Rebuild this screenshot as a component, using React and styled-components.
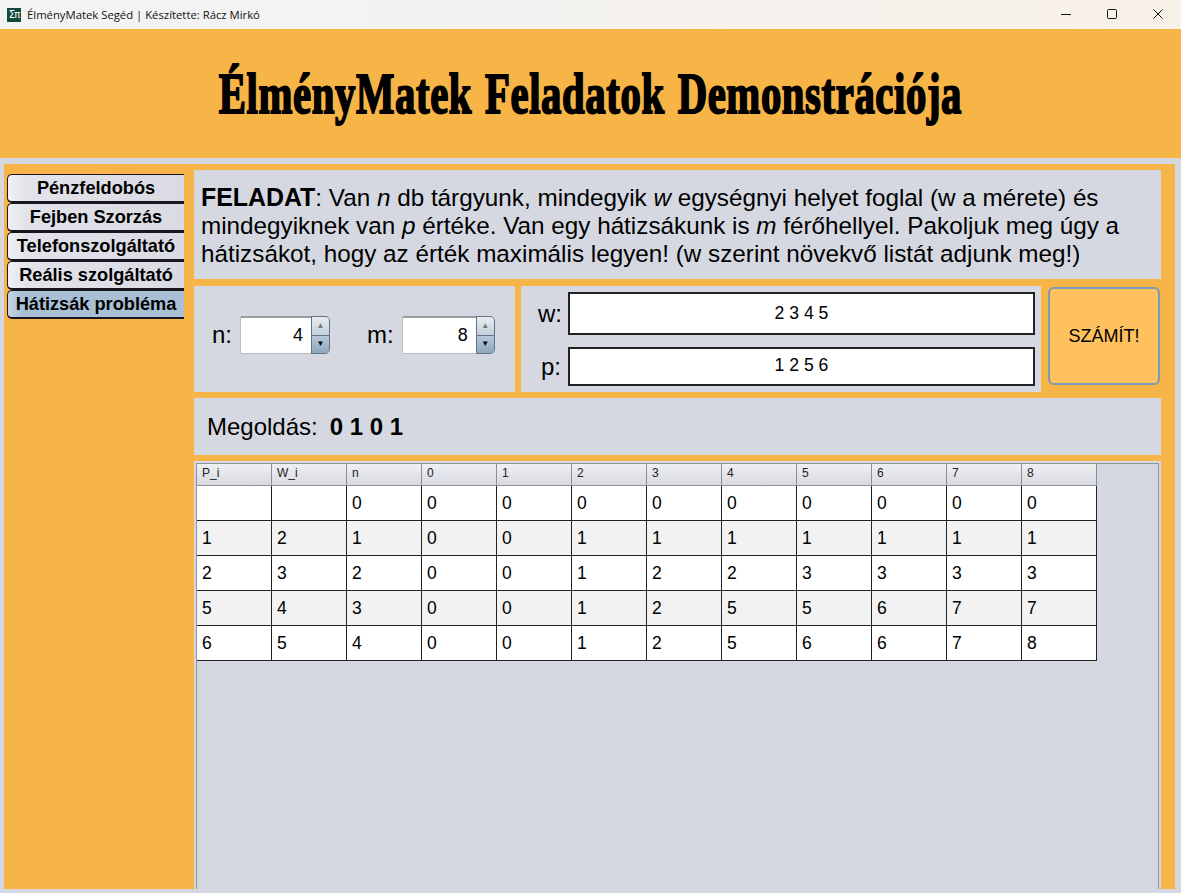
import React from "react";
import styled, { createGlobalStyle } from "styled-components";

const Global = createGlobalStyle`
  html, body { margin: 0; padding: 0; background: #d6d8e1; }
  body { font-family: "Liberation Sans", Arial, sans-serif; color: #000; overflow: hidden; }
`;
const Window = styled.div`
  width: 1181px; height: 893px; display: flex; flex-direction: column; background: #d6d8e1; overflow: hidden;
`;
const TitleBar = styled.div`
  height: 29px; flex: none; display: flex; align-items: center;
  background: linear-gradient(90deg, #f3f3f3 0%, #f3f3f3 30%, #f8f1e8 100%);
`;
const AppIcon = styled.div`
  width: 14px; height: 14px; margin-left: 7px; background: #12493b; color: #fff; display: flex; align-items: center; justify-content: center;
  font: 10px/14px "DejaVu Sans", sans-serif; letter-spacing: -1px; flex: none;
`;
const TitleText = styled.div`
  margin-left: 6px; font: 11.3px "Open Sans", "Noto Sans", sans-serif; color: #111; flex: 1;
`;
const WinButtons = styled.div` display: flex; height: 100%; `;
const WinButton = styled.div`
  width: 46px; height: 27px; padding-bottom: 2px; display: flex; align-items: center; justify-content: center;
`;
const Banner = styled.header`
  height: 129px; flex: none; background: #f8b547; display: flex; align-items: center; justify-content: center;
`;
const BannerTitle = styled.h1`
  margin: 0 0 0 -1px; white-space: nowrap; font: bold 56px "Liberation Serif", serif; color: #000;
  -webkit-text-stroke: 1.9px #000; letter-spacing: 0.8px; word-spacing: 3px; transform: scaleX(0.728);
`;
const Frame = styled.div`
  margin: 6px 6px 4px 4px; height: 725px; flex: none; background: #f8b547; display: flex;
`;
const Sidebar = styled.nav`
  width: 190px; flex: none; padding: 10px 10px 0 3px; box-sizing: border-box; display: flex; flex-direction: column;
`;
const NavButton = styled.div`
  height: 29px; box-sizing: border-box; border: 1px solid #17171f; border-right: none; border-width: 1px 0 2px 1px;
  border-radius: 5px 0 0 5px; display: flex; align-items: center; justify-content: center;
  font: bold 18.2px "Liberation Sans", sans-serif; white-space: nowrap;
  background: ${p => p.$active
    ? "linear-gradient(90deg, #c9d6e2 0%, #a8bfd6 8%, #a9bfd5 100%)"
    : "linear-gradient(90deg, #f0f1f4 0%, #e2e3ea 10%, #d9dae2 100%)"};
`;
const Main = styled.main`
  width: 967px; flex: none; padding-top: 6px; display: flex; flex-direction: column; gap: 6px;
`;
const Task = styled.section`
  height: 109px; box-sizing: border-box; margin-bottom: 1px; background: #d6d8e1; padding: 13px 6px 0 7px;
  font-size: 24.27px; line-height: 28px; color: #000; white-space: nowrap;
`;
const TaskLead = styled.b` font-size: 24.9px; `;
const InputsRow = styled.div` display: flex; height: 106px; `;
const SizePanel = styled.section`
  width: 321px; flex: none; background: #d6d8e1; display: flex; align-items: center; padding-left: 18px; box-sizing: border-box;
  padding-bottom: 8px;
`;
const BigLabel = styled.span`
  font-size: 24px; color: #000; flex: none;
`;
const Spinner = styled.div`
  width: ${p => p.$w}px; height: 38px; margin-left: 8px; display: flex; flex: none; box-sizing: border-box;
  border: 1px solid #b9bbc0; border-top: 2px solid #9a9b9f; border-radius: 2px 5px 5px 2px; background: #fff;
`;
const SpinnerValue = styled.div`
  flex: 1; text-align: right; padding-right: 8px; font-size: 18px; line-height: 35px; height: 35px;
`;
const SpinArrows = styled.div`
  width: 17px; flex: none; margin: -2px -1px -1px 0; display: flex; flex-direction: column;
  border: 1px solid #5f7488; border-radius: 0 5px 5px 0; overflow: hidden;
`;
const SpinArrow = styled.div`
  flex: 1; display: flex; align-items: center; justify-content: center; font-size: 8px; line-height: 1;
  background: ${p => p.$down ? "linear-gradient(#b5c8da,#8fa6bd)" : "linear-gradient(#e8ecf0,#c3cfdb)"};
  color: ${p => p.$down ? "#000" : "#777"};
  ${p => p.$down ? "border-top: 1px solid #5f7488;" : ""}
`;
const SecondLabel = styled(BigLabel)` margin-left: 37px; `;
const ListPanel = styled.section`
  width: 520px; margin-left: 6px; flex: none; box-sizing: border-box; background: #d6d8e1; padding: 6px 6px 0 17px;
  display: flex; flex-direction: column; gap: 12px;
`;
const ListRow = styled.div` display: flex; align-items: center; gap: 7px; `;
const ListLabel = styled(BigLabel)` width: 23px; text-align: right; `;
const ListField = styled.div`
  flex: 1; box-sizing: border-box; height: ${p => p.$h}px; background: #fff; border: 2px solid #222;
  display: flex; align-items: center; justify-content: center; font-size: 17.6px; padding-bottom: ${p => p.$shift}px;
`;
const Compute = styled.button`
  width: 112px; height: 98px; margin: 1px 0 0 7px; flex: none; box-sizing: border-box; border: 2px solid #7d9ab5; border-radius: 6px;
  background: #ffc05e; font: 18px "Liberation Sans", sans-serif; color: #000; padding: 0;
`;
const Solution = styled.section`
  height: 57px; background: #d6d8e1; display: flex; align-items: center; padding-left: 13px; box-sizing: border-box;
  font-size: 24px;
`;
const SolutionValue = styled.b` margin-left: 12px; `;
const TablePanel = styled.section`
  flex: 1; min-height: 0; background: #d6d8e1; padding: 2px 2px 0 2px; box-sizing: border-box; display: flex;
`;
const TableFrame = styled.div`
  flex: 1; box-sizing: border-box; border: 1px solid #8f929c; border-bottom: none;
`;
const Grid = styled.div`
  display: grid; grid-template-columns: repeat(12, 75px); width: 900px;
`;
const HeadCell = styled.div`
  height: 22px; box-sizing: border-box; padding: 2px 0 0 5px; font-size: 12px; line-height: 15px; color: #222;
  background: linear-gradient(#eff0f3, #d8dae1); border-right: 1px solid #8b8e96; border-bottom: 1px solid #8b8e96;
`;
const Cell = styled.div`
  height: 35px; box-sizing: border-box; padding: 0 0 0 5px; font-size: 17.5px; line-height: 35px;
  background: ${p => p.$alt ? "#f2f2f2" : "#fff"}; border-right: 1px solid #222; border-bottom: 1px solid #222;
`;

const headers = ["P_i", "W_i", "n", "0", "1", "2", "3", "4", "5", "6", "7", "8"];
const rows = [
  ["", "", "0", "0", "0", "0", "0", "0", "0", "0", "0", "0"],
  ["1", "2", "1", "0", "0", "1", "1", "1", "1", "1", "1", "1"],
  ["2", "3", "2", "0", "0", "1", "2", "2", "3", "3", "3", "3"],
  ["5", "4", "3", "0", "0", "1", "2", "5", "5", "6", "7", "7"],
  ["6", "5", "4", "0", "0", "1", "2", "5", "6", "6", "7", "8"],
];
const nav = ["Pénzfeldobós", "Fejben Szorzás", "Telefonszolgáltató", "Reális szolgáltató", "Hátizsák probléma"];

const NumberSpinner = ({ value, width }) => (
  <Spinner $w={width}>
    <SpinnerValue>{value}</SpinnerValue>
    <SpinArrows>
      <SpinArrow>▲</SpinArrow>
      <SpinArrow $down>▼</SpinArrow>
    </SpinArrows>
  </Spinner>
);

export default function App() {
  return (
    <Window>
      <Global />
      <TitleBar>
        <AppIcon>Σπ</AppIcon>
        <TitleText>ÉlményMatek Segéd | Készítette: Rácz Mirkó</TitleText>
        <WinButtons>
          <WinButton>
            <svg width="12" height="12" viewBox="0 0 12 12"><path d="M1 6.5h10" stroke="#111" strokeWidth="1" /></svg>
          </WinButton>
          <WinButton>
            <svg width="12" height="12" viewBox="0 0 12 12"><rect x="1.5" y="1.5" width="9" height="9" rx="1.2" fill="none" stroke="#111" /></svg>
          </WinButton>
          <WinButton>
            <svg width="12" height="12" viewBox="0 0 12 12"><path d="M1.5 1.5l9 9M10.5 1.5l-9 9" stroke="#111" strokeWidth="1" /></svg>
          </WinButton>
        </WinButtons>
      </TitleBar>
      <Banner>
        <BannerTitle>ÉlményMatek Feladatok Demonstrációja</BannerTitle>
      </Banner>
      <Frame>
        <Sidebar>
          {nav.map((n, i) => <NavButton key={n} $active={i === 4}>{n}</NavButton>)}
        </Sidebar>
        <Main>
          <Task>
            <TaskLead>FELADAT</TaskLead>: Van <i>n</i> db tárgyunk, mindegyik <i>w</i> egységnyi helyet foglal (w a mérete) és<br />
            mindegyiknek van <i>p</i> értéke. Van egy hátizsákunk is <i>m</i> férőhellyel. Pakoljuk meg úgy a<br />
            hátizsákot, hogy az érték maximális legyen! (w szerint növekvő listát adjunk meg!)
          </Task>
          <InputsRow>
            <SizePanel>
              <BigLabel>n:</BigLabel>
              <NumberSpinner value="4" width={90} />
              <SecondLabel>m:</SecondLabel>
              <NumberSpinner value="8" width={93} />
            </SizePanel>
            <ListPanel>
              <ListRow><ListLabel>w:</ListLabel><ListField $h={43} $shift={0}>2 3 4 5</ListField></ListRow>
              <ListRow><ListLabel>p:</ListLabel><ListField $h={39} $shift={2}>1 2 5 6</ListField></ListRow>
            </ListPanel>
            <Compute>SZÁMÍT!</Compute>
          </InputsRow>
          <Solution>Megoldás:<SolutionValue>0 1 0 1</SolutionValue></Solution>
          <TablePanel>
            <TableFrame>
              <Grid>
                {headers.map(h => <HeadCell key={h}>{h}</HeadCell>)}
                {rows.map((r, i) => r.map((c, j) => <Cell key={j} $alt={i % 2 === 1}>{c}</Cell>))}
              </Grid>
            </TableFrame>
          </TablePanel>
        </Main>
      </Frame>
    </Window>
  );
}
